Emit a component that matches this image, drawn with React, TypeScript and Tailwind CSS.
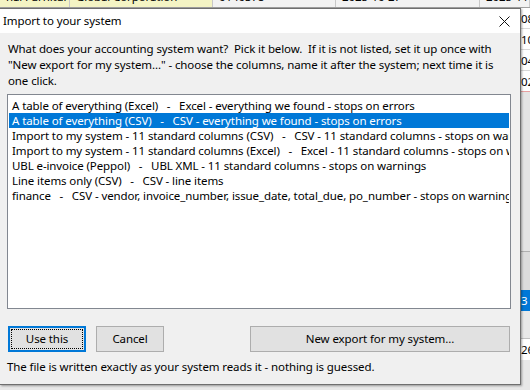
import React from "react";

const rows = [
  "A table of everything (Excel)   -   Excel - everything we found - stops on errors",
  "A table of everything (CSV)   -   CSV - everything we found - stops on errors",
  "Import to my system - 11 standard columns (CSV)   -   CSV - 11 standard columns - stops on warnings",
  "Import to my system - 11 standard columns (Excel)   -   Excel - 11 standard columns - stops on warnings",
  "UBL e-invoice (Peppol)   -   UBL XML - 11 standard columns - stops on warnings",
  "Line items only (CSV)   -   CSV - line items",
  "finance   -   CSV - vendor, invoice_number, issue_date, total_due, po_number - stops on warnings",
];

function TopCell({ w, yellow, text }: { w: string; yellow?: boolean; text: string }) {
  return (
    <div
      className={`${w} h-full overflow-hidden border-r border-[#c8c8c8] ${yellow ? "bg-[#f4f4c4]" : "bg-[#f2f2f2]"} relative`}
    >
      <div className="absolute left-[6px] top-[-11px] leading-[15px] whitespace-nowrap">{text}</div>
    </div>
  );
}

export default function App() {
  return (
    <div className="relative w-[530px] h-[390px] overflow-hidden bg-[#e8e8e8] font-['Noto_Sans',sans-serif] text-[11.5px] tracking-[-0.1px] text-black">
      {/* background spreadsheet */}
      <div className="flex flex-col h-full">
        <div className="flex h-[8px] border-b border-[#a0a0a0] shrink-0">
          <TopCell w="w-[70px]" yellow text="nal Furniture" />
          <TopCell w="w-[143px]" yellow text="Global Corporation" />
          <TopCell w="w-[123px]" text="0140378" />
          <TopCell w="w-[144px]" text="2025-10-27" />
          <TopCell w="w-[50px]" text="2025-11" />
        </div>
        <div className="flex flex-1">
          <div className="flex-1" />
          <div className="w-[9px] flex flex-col leading-[21px]">
            <div className="h-[21px] bg-white border-b border-[#d8d8d8] overflow-hidden whitespace-nowrap">08</div>
            <div className="h-[21px] bg-white border-b border-[#d8d8d8] overflow-hidden whitespace-nowrap">10</div>
            <div className="h-[21px] bg-white border-b border-[#d8d8d8] overflow-hidden whitespace-nowrap">04</div>
            <div className="h-[21px] bg-white border-b border-[#e8a0a0] overflow-hidden whitespace-nowrap">02</div>
            <div className="h-[160px] bg-[#e4e4e4] border-b border-[#b0b0b0]" />
            <div className="h-[38px] bg-[#dcdcdc]" />
            <div className="h-[21px] bg-[#0078d7] text-white overflow-hidden whitespace-nowrap">3</div>
            <div className="h-[28px] bg-[#e8e8e8] border-b border-[#c0c0c0]" />
            <div className="h-[21px] bg-white overflow-hidden whitespace-nowrap">26</div>
          </div>
        </div>
      </div>

      {/* dialog */}
      <div className="absolute left-0 top-[8px] w-[521px] h-[377px] bg-[#f0f0f0] border border-[#6f6f6f] border-l-0 shadow-[1px_1px_2px_rgba(0,0,0,0.35)] flex flex-col">
        <div className="h-[24px] bg-white flex items-center justify-between pl-[3px] pr-[10px] shrink-0">
          <span>Import to your system</span>
          <svg width="11" height="11" viewBox="0 0 11 11" className="mt-[1px]">
            <path d="M0.5 0.5 L10.5 10.5 M10.5 0.5 L0.5 10.5" stroke="#111" strokeWidth="1" />
          </svg>
        </div>
        <div className="flex flex-col px-[7px] pt-[8px] flex-1">
          <div className="leading-[16px] pl-[1px] whitespace-nowrap">
            <div className="whitespace-pre">What does your accounting system want?  Pick it below.  If it is not listed, set it up once with</div>
            <div className="whitespace-pre">"New export for my system..." - choose the columns, name it after the system; next time it is</div>
            <div>one click.</div>
          </div>
          <div className="mt-[5px] w-[504px] h-[215px] bg-white border border-[#828790] p-[1px] pt-[3px] overflow-hidden">
            {rows.map((r, i) => (
              <div
                key={i}
                className={`h-[15px] leading-[15px] pl-[3px] whitespace-pre overflow-hidden ${i === 1 ? "bg-[#0078d7] text-white" : ""}`}
              >
                {r}
              </div>
            ))}
          </div>
          <div className="flex items-center mt-[17px] pl-[1px]">
            <button className="w-[78px] h-[26px] bg-[#e1e1e1] border-2 border-[#0078d7] p-[1px]">
              <div className="w-full h-full border border-dotted border-black flex items-center justify-center">Use this</div>
            </button>
            <button className="ml-[10px] w-[68px] h-[26px] bg-[#e1e1e1] border border-[#adadad] flex items-center justify-center">
              Cancel
            </button>
            <button className="ml-[86px] w-[260px] h-[26px] bg-[#e1e1e1] border border-[#adadad] flex items-center justify-center">
              New export for my system...
            </button>
          </div>
          <div className="mt-[7px] leading-[16px]">The file is written exactly as your system reads it - nothing is guessed.</div>
        </div>
      </div>
    </div>
  );
}
